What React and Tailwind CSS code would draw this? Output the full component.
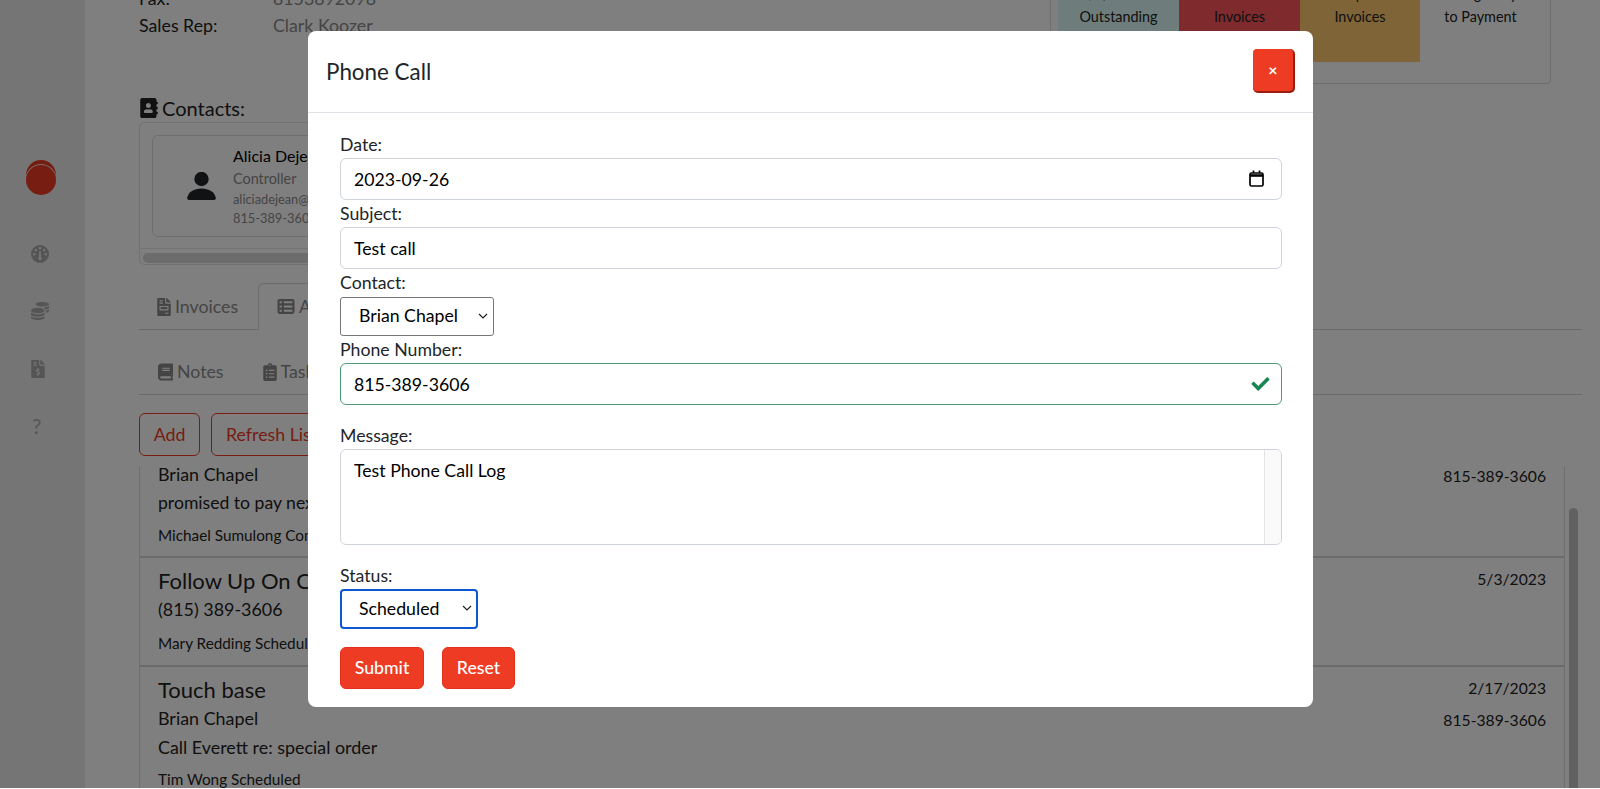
import { FaAddressBook, FaBook, FaCheck, FaClipboardList, FaCoins, FaFileInvoice, FaFileInvoiceDollar } from 'react-icons/fa'
import { FaTableList } from 'react-icons/fa6'

function Chevron() {
  return (
    <svg viewBox="0 0 10 6" className="absolute right-[6px] top-[16px] w-[10px] h-[6px] pointer-events-none" fill="none" stroke="#222" strokeWidth="1.2">
      <path d="M1 1l4 4 4-4" />
    </svg>
  )
}

function Gauge() {
  return (
    <svg viewBox="0 0 18 18" className="w-[18px] h-[18px] mb-[39px]">
      <circle cx="9" cy="9" r="9" fill="currentColor" />
      <g fill="#ebebeb">
        <circle cx="9" cy="3.2" r="1.2" />
        <circle cx="4.8" cy="5" r="1.2" />
        <circle cx="13.2" cy="5" r="1.2" />
        <circle cx="3.2" cy="9.2" r="1.2" />
        <circle cx="14.8" cy="9.2" r="1.2" />
        <path d="M8.4 6h1.2l.5 6.5a1.6 1.6 0 1 1-2.2 0z" />
      </g>
    </svg>
  )
}

function Sidebar() {
  return (
    <aside className="w-[85px] shrink-0 bg-[#ebebeb] flex flex-col items-start pl-[31px] pt-[160px] text-[#aaaaaa]">
      <svg viewBox="0 0 30 35" className="w-[30px] h-[35px] -ml-[5px] mb-[50px]">
        <circle cx="15" cy="15" r="15" fill="#e63a23" />
        <circle cx="15" cy="19.5" r="15.5" fill="#fbd8d2" />
        <circle cx="15" cy="20" r="15" fill="#ee3b24" />
      </svg>
      <Gauge />
      <FaCoins className="w-[18px] h-[18px] mb-[40px]" />
      <FaFileInvoiceDollar className="w-[14px] h-[18px] mb-[36px]" />
      <span className="text-[21px] leading-[24px] ml-[1px]">?</span>
    </aside>
  )
}

function Stats() {
  return (
    <div className="w-[501px] h-[104px] mr-[31px] border border-[#dddddd] rounded-[4px] pl-[7px] flex items-start text-[14.4px] leading-[23px] text-[#222222] text-center">
      <div className="w-[121px] h-[81px] pt-[1px] bg-[#dcfbf6]">$1,284.16<br />Outstanding</div>
      <div className="w-[121px] h-[81px] pt-[1px] bg-[#fe575c]">Overdue<br />Invoices</div>
      <div className="w-[120px] h-[81px] pt-[1px] bg-[#ffc970]">Unpaid<br />Invoices</div>
      <div className="w-[121px] h-[81px] pt-[1px]">Average Days<br />to Payment</div>
    </div>
  )
}

function PersonIcon() {
  return (
    <svg viewBox="0 0 29 28" className="w-[29px] h-[28px] text-[#212529]" fill="currentColor">
      <circle cx="14.5" cy="7" r="7.2" />
      <path d="M2 28C.6 28 0 27 .2 25.8 1.2 20 7 16.5 14.5 16.5S27.800 20 28.800 25.800C29 27 28.400 28 27 28Z" />
    </svg>
  )
}

function Background() {
  return (
    <main className="flex-1 pl-[54px] pr-[19px] -mt-[20px] text-[17.75px] text-[#222222]">
      <section className="h-[115px] flex justify-between items-start">
        <div className="pt-[5px] leading-[27px]">
          <div className="flex"><span className="w-[134px]">Fax:</span><span className="text-[#8a8a8a]">8153892098</span></div>
          <div className="flex"><span className="w-[134px]">Sales Rep:</span><span className="text-[#8a8a8a]">Clark Koozer</span></div>
        </div>
        <Stats />
      </section>

      <h2 className="h-[25px] flex items-center gap-[4px] text-[20px] text-[#222222]">
        <FaAddressBook className="w-[18px] h-[20px] ml-[1px]" />
        Contacts:
      </h2>
      <div className="w-[1120px] h-[143px] mt-[2px] border border-[#e2e2e2] rounded-[6px] overflow-hidden">
        <div className="h-[126px] pt-[12px] pl-[12px] border-b border-[#e8e8e8]">
          <div className="w-[300px] h-[102px] border border-[#dddddd] rounded-[6px] flex items-center">
            <div className="w-[80px] flex justify-center pl-[17px]">
              <PersonIcon />
            </div>
            <div>
              <div className="text-[16px] leading-[24px] text-black">Alicia Dejean</div>
              <div className="text-[14.4px] leading-[22px] text-[#8a8a8a]">Controller</div>
              <div className="text-[12.8px] leading-[19px] text-[#8a8a8a]">aliciadejean@example.com</div>
              <div className="text-[12.8px] leading-[19px] text-[#8a8a8a]">815-389-3606</div>
            </div>
          </div>
        </div>
        <div className="h-[10px] mt-[4px] mx-[3px] rounded-full bg-[#d8d8d8]" />
      </div>

      <nav className="h-[65px] pt-[18px] flex items-end border-b border-[#d4d4d4] text-[#8a8a8a]">
        <div className="w-[119px] h-[46px] pl-[18px] pt-[1px] flex items-center gap-[4px]">
          <FaFileInvoice className="w-[14px] h-[18px]" />Invoices
        </div>
        <div className="w-[200px] h-[47px] -mb-px pl-[18px] flex items-center gap-[4px] bg-white border border-b-white border-[#d4d4d4] rounded-t-[6px]">
          <FaTableList className="w-[18px] h-[17px]" />Activity
        </div>
      </nav>
      <nav className="h-[65px] flex items-center gap-[39px] pt-[19px] pl-[19px] border-b border-[#d4d4d4] text-[#8a8a8a]">
        <span className="flex items-center gap-[4px]"><FaBook className="w-[15px] h-[18px]" />Notes</span>
        <span className="flex items-center gap-[4px]"><FaClipboardList className="w-[14px] h-[18px]" />Tasks</span>
      </nav>

      <div className="flex gap-[11px] mt-[18px] text-[#ee3b24]">
        <button className="h-[43px] w-[61px] border border-[#ee3b24] rounded-[6px]">Add</button>
        <button className="h-[43px] px-[14px] border border-[#ee3b24] rounded-[6px]">Refresh List</button>
      </div>

      <div className="flex mt-[10px]">
        <div className="w-[1426px] h-[322px] border-x border-[#dddddd] overflow-hidden px-[18px] text-[17.9px]">
          <div className="h-[92px] -mx-[18px] px-[18px] border-b-2 border-[#d6d6d6] flex justify-between">
            <div>
              <div className="-mt-[4px] leading-[24px]">Brian Chapel</div>
              <div className="mt-[3px] leading-[28px] text-[17.6px]">promised to pay next week</div>
              <div className="mt-[6px] leading-[24px] text-[15.3px]">Michael Sumulong Completed</div>
            </div>
            <div className="leading-[22px] text-[15.7px] -mt-px">815-389-3606</div>
          </div>
          <div className="h-[109px] -mx-[18px] px-[18px] border-b-2 border-[#d6d6d6] flex justify-between">
            <div>
              <div className="mt-[8px] text-[22px] leading-[30px]">Follow Up On Call</div>
              <div className="mt-[1px] leading-[24px]">(815) 389-3606</div>
              <div className="mt-[10px] leading-[24px] text-[15.3px]">Mary Redding Scheduled</div>
            </div>
            <div className="mt-[10px] leading-[22px] text-[15.7px]">5/3/2023</div>
          </div>
          <div className="flex justify-between">
            <div>
              <div className="mt-[8px] text-[22px] leading-[30px]">Touch base</div>
              <div className="mt-[1px] leading-[24px]">Brian Chapel</div>
              <div className="mt-[5px] leading-[24px]">Call Everett re: special order</div>
              <div className="mt-[8px] leading-[24px] text-[15.3px]">Tim Wong Scheduled</div>
            </div>
            <div className="leading-[22px] text-[15.7px]">
              <div className="mt-[10px] text-right">2/17/2023</div>
              <div className="mt-[10px]">815-389-3606</div>
            </div>
          </div>
        </div>
        <div className="w-[17px] h-[322px] pl-[4px]">
          <div className="w-[9px] h-[290px] mt-[42px] rounded-full bg-[#c2c2c2]" />
        </div>
      </div>
    </main>
  )
}

function PhoneCallModal() {
  const inputCls = 'block w-full h-[42px] px-[13px] rounded-[6px] text-black outline-none bg-white'
  return (
    <div className="w-[1005px] h-[676px] bg-white rounded-[8px] text-[17.7px] text-[#212529]">
      <header className="h-[82px] px-[18px] flex items-center justify-between border-b border-[#dee2e6]">
        <h1 className="text-[22.4px] leading-[30px]">Phone Call</h1>
        <button className="w-[40px] h-[42px] mr-[2px] -mt-[4px] bg-[#ee3b24] rounded-[4px] shadow-[1px_1px_0_1px_#9c1d0e] text-white text-[16px] font-bold">×</button>
      </header>
      <form className="pt-[19px] px-[32px]">
        <label className="block h-[26px] leading-[25px]">Date:</label>
        <div className="relative w-[942px]">
          <input readOnly value="2023-09-26" className={`${inputCls} border border-[#ced4da]`} />
          <svg viewBox="0 0 15 17" className="absolute right-[18px] top-[12px] w-[15px] h-[17px]" fill="none" stroke="#000" strokeWidth="1.7">
            <rect x="1" y="3" width="13" height="13" rx="1.5" />
            <path d="M1 5.500h13" strokeWidth="2.600" />
            <path d="M4.500 0.500v2.500M10.500 0.500v2.500" />
          </svg>
        </div>
        <label className="block h-[27px] leading-[27px]">Subject:</label>
        <div className="w-[942px]">
          <input readOnly value="Test call" className={`${inputCls} border border-[#ced4da]`} />
        </div>
        <label className="block h-[28px] leading-[28px]">Contact:</label>
        <div className="relative w-[154px] h-[39px]">
          <select className="appearance-none w-full h-full pl-[18px] border border-[#767676] rounded-[3px] bg-white text-black">
            <option>Brian Chapel</option>
          </select>
          <Chevron />
        </div>
        <label className="block h-[27px] leading-[27px]">Phone Number:</label>
        <div className="relative w-[942px]">
          <input readOnly value="815-389-3606" className={`${inputCls} border border-[#4a9a75]`} />
          <FaCheck className="absolute right-[12px] top-[12px] w-[19px] h-[18px] text-[#198754]" />
        </div>
        <label className="block h-[26px] mt-[18px] leading-[26px]">Message:</label>
        <div className="w-[942px] h-[96px] flex border border-[#ced4da] rounded-[6px] overflow-hidden">
          <textarea readOnly value="Test Phone Call Log" className="flex-1 h-full px-[13px] py-[8px] resize-none outline-none text-black leading-[26px]" />
          <div className="w-[17px] bg-[#fafafa] border-l border-[#e4e4e4]" />
        </div>
        <label className="block h-[26px] mt-[18px] leading-[26px]">Status:</label>
        <div className="relative w-[138px] h-[40px]">
          <select className="appearance-none w-full h-full pl-[17px] border-2 border-[#0d58d1] rounded-[4px] bg-white text-black outline-none">
            <option>Scheduled</option>
          </select>
          <Chevron />
        </div>
        <div className="flex gap-[18px] mt-[18px] text-white font-medium">
          <button type="button" className="w-[84px] h-[42px] bg-[#ee3b24] rounded-[6px] border border-[#e2301a]">Submit</button>
          <button type="button" className="w-[73px] h-[42px] bg-[#ee3b24] rounded-[6px] border border-[#e2301a]">Reset</button>
        </div>
      </form>
    </div>
  )
}

export default function App() {
  return (
    <div className="h-[789px] bg-white font-['Lato',sans-serif]">
      <div className="relative h-[788px] overflow-hidden flex bg-white">
        <Sidebar />
        <Background />
        <div className="absolute inset-0 bg-black/50 flex justify-center items-start pt-[31px] pl-[21px]">
          <PhoneCallModal />
        </div>
      </div>
    </div>
  )
}
